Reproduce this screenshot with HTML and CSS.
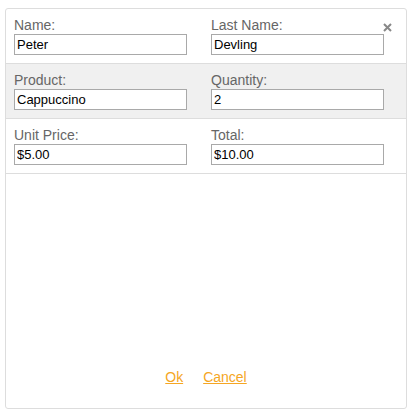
FILE: index.html
```html
<!DOCTYPE html>
<html lang="en">
<head>
    <meta charset="UTF-8">
    <meta name="viewport" content="width=device-width, initial-scale=1.0">
    <title>Order Editor</title>
    <link rel="stylesheet" href="styles.css">
</head>
<body>
    <div class="popup">
        <button class="close" title="Close">
            <svg width="9" height="9" viewBox="0 0 9 9">
                <path d="M1 1 L8 8 M8 1 L1 8" stroke="#888" stroke-width="2" fill="none"/>
            </svg>
        </button>
        <div class="row">
            <div class="field">
                <label for="name">Name:</label>
                <input type="text" id="name" value="Peter">
            </div>
            <div class="field">
                <label for="last-name">Last Name:</label>
                <input type="text" id="last-name" value="Devling">
            </div>
        </div>
        <div class="row alt">
            <div class="field">
                <label for="product">Product:</label>
                <input type="text" id="product" value="Cappuccino">
            </div>
            <div class="field">
                <label for="quantity">Quantity:</label>
                <input type="text" id="quantity" value="2">
            </div>
        </div>
        <div class="row">
            <div class="field">
                <label for="price">Unit Price:</label>
                <input type="text" id="price" value="$5.00">
            </div>
            <div class="field">
                <label for="total">Total:</label>
                <input type="text" id="total" value="$10.00">
            </div>
        </div>
        <div class="footer">
            <a href="#">Ok</a>
            <a href="#">Cancel</a>
        </div>
    </div>
</body>
</html>
```

FILE: styles.css
```css
body {
    font-family: 'Liberation Sans', Arial, sans-serif;
    margin: 0;
    padding: 8px 0 0 5px;
    background-color: #fff;
    color: #666;
}
.popup {
    position: relative;
    width: 400px;
    height: 399px;
    border: 1px solid #ddd;
    border-radius: 3px;
    display: flex;
    flex-direction: column;
}
.close {
    position: absolute;
    top: 14px;
    right: 14px;
    padding: 0;
    border: none;
    background: none;
    cursor: pointer;
    line-height: 0;
}
.row {
    display: grid;
    grid-template-columns: 173px 173px;
    column-gap: 24px;
    padding: 8px 8px;
    border-bottom: 1px solid #ddd;
}
.row.alt {
    background-color: #f0f0f0;
}
.field label {
    display: block;
    font-size: 14px;
    line-height: 17px;
}
.field input {
    display: block;
    box-sizing: border-box;
    width: 173px;
    height: 21px;
    margin: 0;
    padding: 1px 2px;
    border: 1px solid #a9a9a9;
    font-family: 'Liberation Sans', Arial, sans-serif;
    font-size: 13px;
    color: #000;
    background-color: #fff;
}
.footer {
    margin-top: auto;
    display: flex;
    justify-content: center;
    gap: 20px;
    padding-bottom: 23px;
    font-size: 14px;
    line-height: 16px;
}
.footer a {
    color: #f5a623;
}
```
